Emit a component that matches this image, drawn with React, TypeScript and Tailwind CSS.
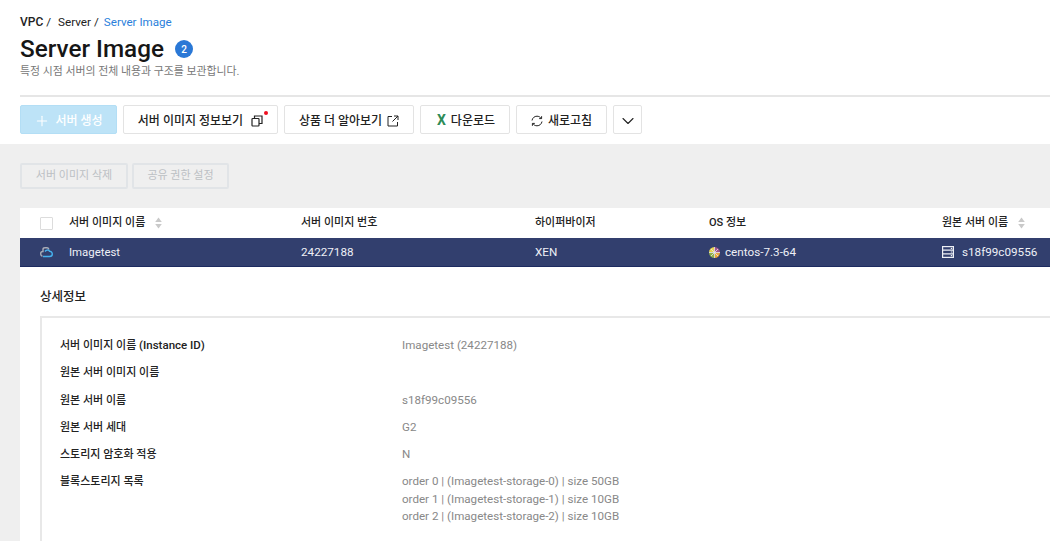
import { ChevronDown, Plus } from "lucide-react"

// Small sort arrows next to the table headings
function SortIcon() {
  return (
    <svg width="7" height="12" viewBox="0 0 7 12" className="ml-[10px]">
      <path d="M3.5 0.5 L6.8 5 H0.2 Z" fill="#c9c9c9" />
      <path d="M3.5 11.5 L6.8 7 H0.2 Z" fill="#c9c9c9" />
    </svg>
  )
}

function CopyIcon() {
  return (
    <svg width="12" height="12" viewBox="0 0 12 12" fill="none" stroke="#222" strokeWidth="1.2">
      <rect x="1" y="3.5" width="7" height="7.5" rx="0.8" />
      <path d="M3.5 3.5V1h7.5v7.5H8" />
    </svg>
  )
}

function OpenIcon() {
  return (
    <svg width="12" height="12" viewBox="0 0 12 12" fill="none" stroke="#222" strokeWidth="1">
      <path d="M5 1.5H1v9.5h9.5V7" />
      <path d="M7 1h4v4M11 1 5.5 6.5" />
    </svg>
  )
}

function RefreshIcon() {
  return (
    <svg width="12" height="12" viewBox="0 0 12 12" fill="none" stroke="#222" strokeWidth="1">
      <path d="M1 5.500C1.400 3 3.400 1.200 6 1.200c1.700 0 3.200.8 4.100 2.100" />
      <path d="M11 6.500c-.4 2.500-2.400 4.300-5 4.300-1.700 0-3.200-.8-4.100-2.100" />
      <path d="M10.600 1.200v2.400H8.200" />
      <path d="M1.400 10.800V8.400h2.400" />
    </svg>
  )
}

function CloudIcon() {
  return (
    <svg width="13" height="11" viewBox="0 0 13 11" fill="none" strokeWidth="1.4">
      <path d="M2.500 9C1 9 .7 7.500 .7 6.500.7 5 2 4.500 3 4.500V2.500C3 1.200 4 .8 5 .8H7C8 .8 8.600 1.500 9 2.500" stroke="#a9adb8" />
      <path d="M5 4.500C6 3 8 2.500 9 3.500L9.500 4.200C11 4 12.300 5.500 12.300 7 12.300 8.500 11 9.500 9.500 9.500H3" stroke="#46b2ee" />
    </svg>
  )
}

function CentosIcon() {
  return (
    <svg width="11" height="11" viewBox="0 0 11 11">
      <path d="M5.500 5.500V0A5.500 5.500 0 0 0 0 5.500Z" fill="#e8d44d" />
      <path d="M5.500 5.500H11A5.500 5.500 0 0 0 5.500 0Z" fill="#a0568f" />
      <path d="M5.500 5.500V11A5.500 5.500 0 0 0 11 5.500Z" fill="#e9a63a" />
      <path d="M5.500 5.500H0A5.500 5.500 0 0 0 5.500 11Z" fill="#8fb04a" />
      <path d="M5.500 0V11M0 5.500H11M2 2 9 9M9 2 2 9" stroke="#e8e8f0" strokeWidth="0.8" />
    </svg>
  )
}

function ServerIcon() {
  return (
    <svg width="12" height="12" viewBox="0 0 12 12" fill="none" stroke="#eef0f6" strokeWidth="1.2">
      <rect x="0.6" y="0.6" width="10.800" height="10.800" />
      <path d="M0.600 4.200H11.400M0.600 7.800H11.400" />
      <path d="M8.800 2.400h1.400M8.800 6h1.400M8.800 9.600h1.400" />
    </svg>
  )
}

function ToolButton({ className, children }: { className: string; children: React.ReactNode }) {
  return (
    <button className={`h-[29px] pt-[2px] flex items-center justify-center bg-white border border-[#e3e3e3] rounded-[2px] text-[12px] font-medium text-[#222] ${className}`}>
      {children}
    </button>
  )
}

const details: { label: React.ReactNode; value: string[] }[] = [
  { label: <>서버 이미지 이름 <span className="text-[11.5px]">(Instance ID)</span></>, value: ["Imagetest (24227188)"] },
  { label: "원본 서버 이미지 이름", value: [""] },
  { label: "원본 서버 이름", value: ["s18f99c09556"] },
  { label: "원본 서버 세대", value: ["G2"] },
  { label: "스토리지 암호화 적용", value: ["N"] },
  {
    label: "블록스토리지 목록",
    value: [
      "order 0 | (Imagetest-storage-0) | size 50GB",
      "order 1 | (Imagetest-storage-1) | size 10GB",
      "order 2 | (Imagetest-storage-2) | size 10GB",
    ],
  },
]

export default function App() {
  return (
    <div className="w-[1050px] h-[541px] overflow-hidden bg-white font-['Roboto','Noto_Sans_CJK_KR',sans-serif] flex flex-col">
      {/* Page heading */}
      <div className="pl-5 pt-[15px] h-[144px] shrink-0">
        <div className="flex items-center text-[11.7px] leading-[15px] text-[#222]">
          <span className="font-medium text-[12px]">VPC</span>
          <span className="ml-[3px]">/</span>
          <span className="ml-[7px]">Server</span>
          <span className="ml-[3px]">/</span>
          <span className="ml-[5px] text-[#2a7fdb] text-[11.6px]">Server Image</span>
        </div>
        <div className="flex items-center mt-[5px] h-[28px]">
          <h1 className="text-[24.3px] leading-[28px] font-medium text-[#161616]">Server Image</h1>
          <span className="ml-[11px] w-[18px] h-[18px] rounded-full bg-[#2a78d6] text-white text-[10px] font-medium flex items-center justify-center">2</span>
        </div>
        <p className="text-[10.9px] leading-[16px] mt-px text-[#777]">특정 시점 서버의 전체 내용과 구조를 보관합니다.</p>

        <div className="h-[2px] bg-[#e6e6e6] mt-[15px]" />

        {/* Toolbar */}
        <div className="flex gap-[6px] mt-[8px]">
          <button className="w-[97px] h-[29px] pt-[2px] flex items-center justify-center gap-[5px] bg-[#bde3f7] border border-[#b3def5] rounded-[2px] text-[12px] font-medium text-white">
            <Plus size={16} strokeWidth={1.6} />
            서버 생성
          </button>
          <ToolButton className="w-[155px] gap-[8px] relative">
            서버 이미지 정보보기
            <CopyIcon />
            <span className="absolute right-[9px] top-[5px] w-[4px] h-[4px] rounded-full bg-[#f01020]" />
          </ToolButton>
          <ToolButton className="w-[130px] gap-[5px]">
            상품 더 알아보기
            <OpenIcon />
          </ToolButton>
          <ToolButton className="w-[90px] gap-[5px] pl-[2px]">
            <span className="text-[#2e8b57] text-[14px] font-bold">X</span>
            다운로드
          </ToolButton>
          <ToolButton className="w-[91px] gap-[5px]">
            <RefreshIcon />
            새로고침
          </ToolButton>
          <ToolButton className="w-[29px]">
            <ChevronDown size={20} strokeWidth={1.3} />
          </ToolButton>
        </div>
      </div>

      {/* Gray content area */}
      <div className="flex-1 bg-[#efefef] pl-5 min-h-0">
        <div className="flex gap-1 pt-[19px]">
          <button className="w-[108px] h-[26px] border-2 border-[#e1e4e7] rounded-[2px] text-[11px] text-[#bcc0c4]">서버 이미지 삭제</button>
          <button className="w-[97px] h-[26px] border-2 border-[#e1e4e7] rounded-[2px] text-[11px] text-[#bcc0c4]">공유 권한 설정</button>
        </div>

        <div className="mt-[19px] bg-white h-[400px] overflow-hidden">
          {/* Table head */}
          <div className="flex items-center h-[30px] text-[11px] font-medium text-[#222]">
            <div className="w-[49px] pl-5 shrink-0">
              <div className="w-[13px] h-[13px] border border-[#dcdcdc] rounded-[1px] bg-white" />
            </div>
            <div className="w-[232px] shrink-0 flex items-center">서버 이미지 이름<SortIcon /></div>
            <div className="w-[234px] shrink-0">서버 이미지 번호</div>
            <div className="w-[174px] shrink-0">하이퍼바이저</div>
            <div className="w-[233px] shrink-0">OS 정보</div>
            <div className="shrink-0 flex items-center whitespace-nowrap">원본 서버 이름<SortIcon /></div>
          </div>

          {/* Selected row */}
          <div className="flex items-center h-[29px] pt-px bg-[#323f6e] border-b border-[#1d2b60] text-[11.7px] text-[#eef0f6]">
            <div className="w-[49px] pl-5 shrink-0"><CloudIcon /></div>
            <div className="w-[232px] shrink-0 text-[11.4px]">Imagetest</div>
            <div className="w-[234px] shrink-0">24227188</div>
            <div className="w-[174px] shrink-0">XEN</div>
            <div className="w-[233px] shrink-0 flex items-center gap-[5px]"><CentosIcon />centos-7.3-64</div>
            <div className="shrink-0 flex items-center gap-[8px] whitespace-nowrap"><ServerIcon />s18f99c09556</div>
          </div>

          {/* Detail panel */}
          <div className="pl-5 pt-[21px]">
            <h2 className="text-[12.5px] leading-[18px] font-medium text-[#222]">상세정보</h2>
            <div className="mt-[10px] h-[300px] border-l-2 border-t-2 border-[#e8e8e8] pl-[18px] pt-[19px]">
              {details.map((row, idx) => (
                <div key={idx} className="flex text-[11.6px] leading-[17.5px] mb-[9.75px]">
                  <div className="w-[342px] shrink-0 font-medium text-[11px] text-[#222]">{row.label}</div>
                  <div className="text-[#888]">
                    {row.value.map((line, i) => (
                      <div key={i} className="min-h-[17.5px]">{line}</div>
                    ))}
                  </div>
                </div>
              ))}
            </div>
          </div>
        </div>
      </div>
    </div>
  )
}
